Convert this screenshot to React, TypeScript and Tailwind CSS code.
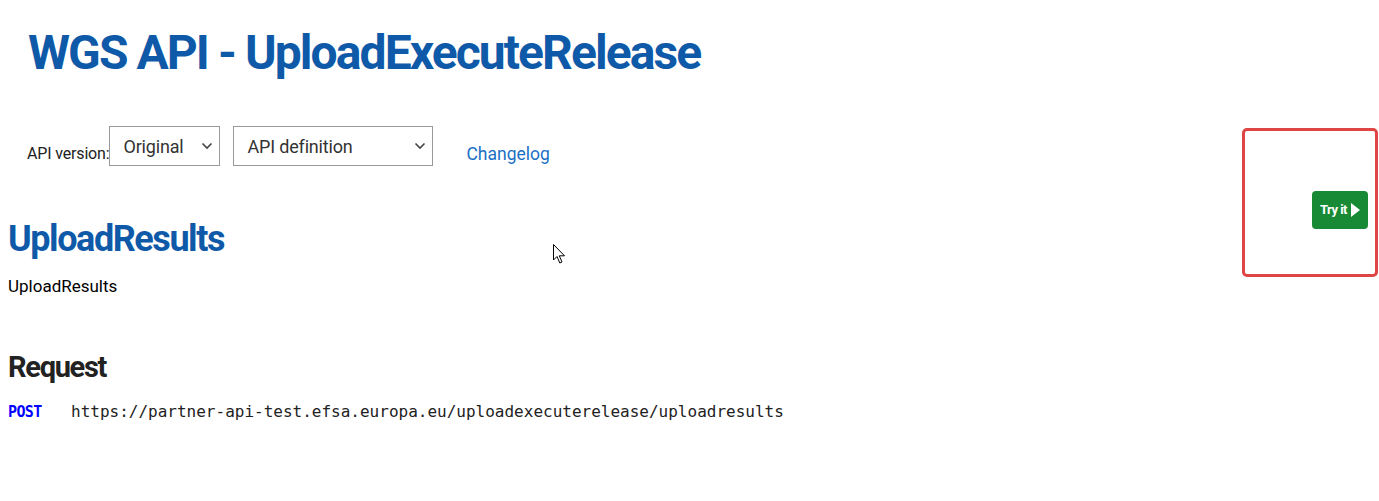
export default function App() {
  return (
    <div className="relative min-h-[501px] bg-white px-2 font-['Roboto',sans-serif] text-black">
      <h1 className="pl-5 pt-[24px] text-[48px] font-bold leading-[58px] tracking-[-0.04em] text-[#0f5aa8]">
        WGS API - UploadExecuteRelease
      </h1>

      <div className="mt-[43px] flex items-center">
        <span className="ml-[19px] mt-4 text-[16px] tracking-[-0.01em] text-[#222]">API version:</span>
        <div className="flex h-10 w-[111px] items-center justify-between border border-[#999] pl-[13px] pr-[6px] text-[18px] text-[#333]">
          <span className="tracking-[-0.01em]">Original</span>
          <Chevron />
        </div>
        <div className="ml-[13px] flex h-10 w-[200px] items-center justify-between border border-[#999] pl-[13px] pr-[6px] text-[18px] text-[#333]">
          <span className="tracking-[-0.01em]">API definition</span>
          <Chevron />
        </div>
        <a className="ml-[33px] mt-4 text-[17.5px] text-[#1a6fc4]">Changelog</a>
      </div>

      <h2 className="mt-[50px] text-[36px] font-bold leading-[44px] tracking-[-0.04em] text-[#0f5aa8]">
        UploadResults
      </h2>
      <p className="mt-[13px] text-[17px]">UploadResults</p>

      <h3 className="mt-[49px] text-[29px] font-bold leading-[36px] tracking-[-0.045em] text-[#222]">Request</h3>
      <div className="mt-[15px] flex items-baseline font-['DejaVu_Sans_Mono',monospace]">
        <span className="w-[63px] text-[15px] font-bold tracking-[-0.04em] text-[#0000ff]">POST</span>
        <span className="text-[16px] text-[#222]">https://partner-api-test.efsa.europa.eu/uploadexecuterelease/uploadresults</span>
      </div>

      <div className="absolute left-[1242px] top-[128px] flex h-[149px] w-[136px] items-start justify-end rounded-[5px] border-[3px] border-[#e04545] pr-[7px] pt-[60px]">
        <button className="flex h-[38px] w-[56px] items-center justify-center gap-[4px] rounded-[4px] bg-[#188a35] text-[13px] font-bold tracking-[-0.04em] text-white">
          Try it
          <svg width="9" height="14" viewBox="0 0 9 14">
            <path d="M0 0 L9 7 L0 14 Z" fill="white" />
          </svg>
        </button>
      </div>

      <svg className="absolute left-[553px] top-[244px]" width="13" height="21" viewBox="0 0 13 21">
        <path d="M0.5 0.5 L0.5 16 L4 12.5 L6.8 19 L9 18 L6.3 11.8 L11.5 11.8 Z" fill="white" stroke="black" strokeWidth="1" />
      </svg>
    </div>
  );
}

function Chevron() {
  return (
    <svg width="12" height="8" viewBox="0 0 12 8" fill="none" stroke="#444" strokeWidth="1.6">
      <path d="M1.5 1.5 L6 6 L10.5 1.5" />
    </svg>
  );
}
